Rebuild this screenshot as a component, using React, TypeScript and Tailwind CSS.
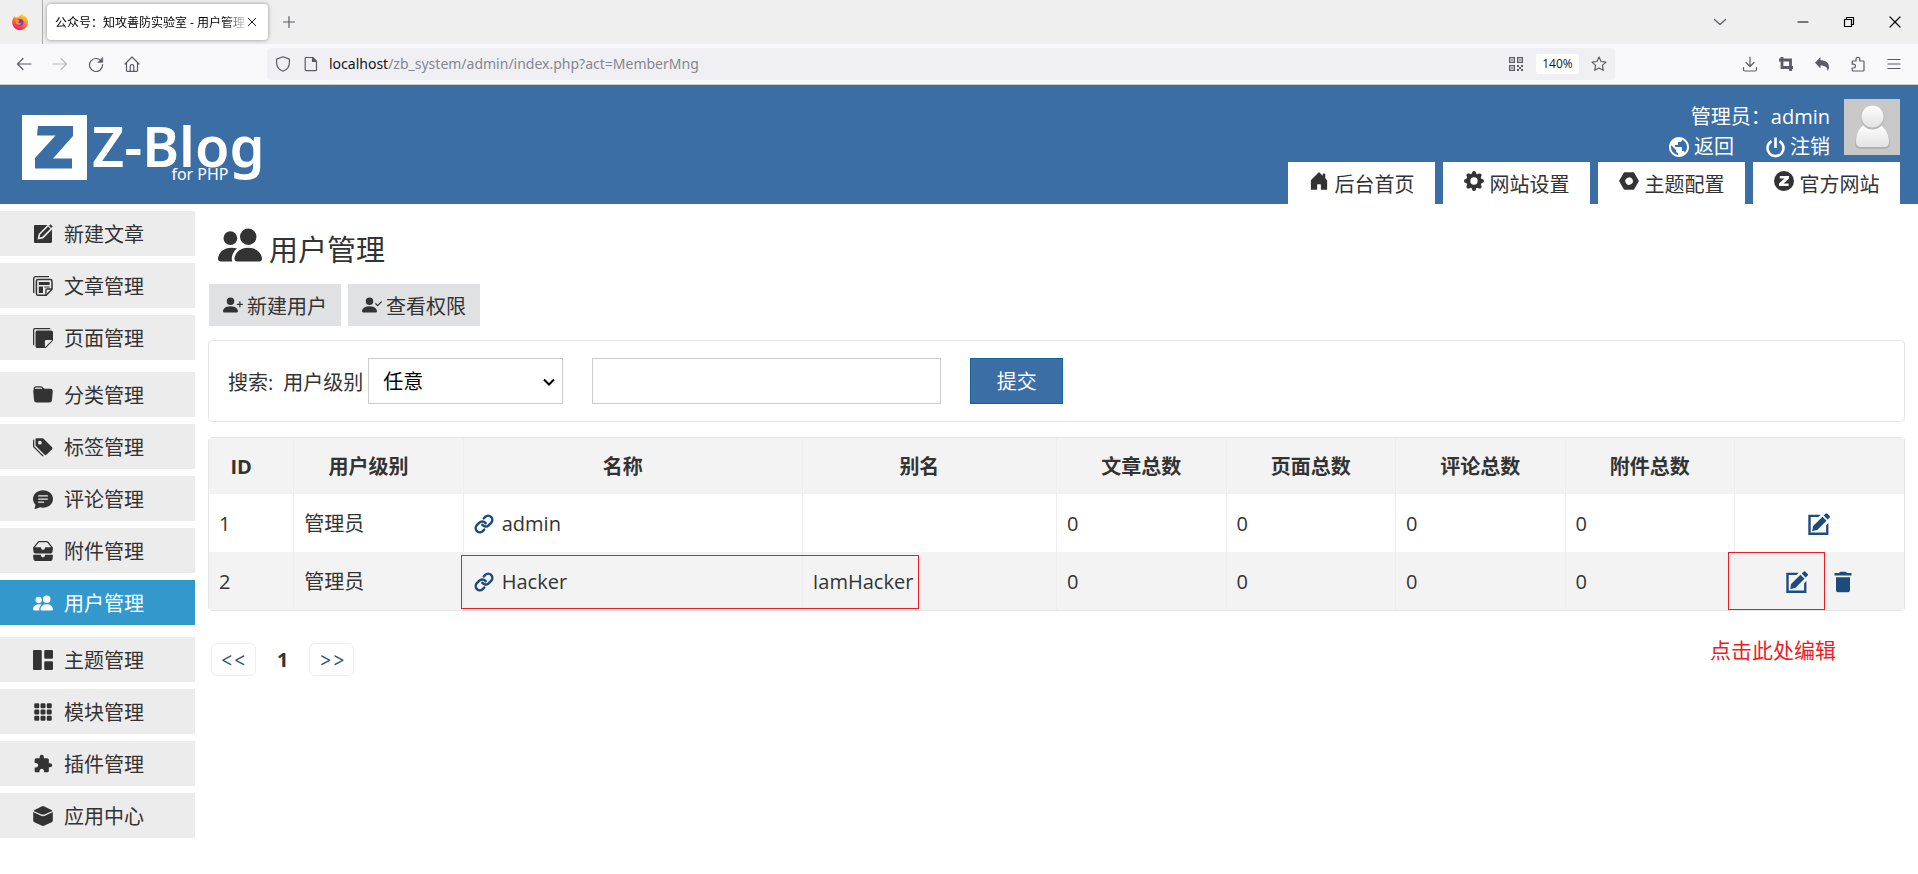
import type { ComponentType, ReactNode } from 'react';
import {
  BsStickiesFill,
  BsFolderFill,
  BsTagsFill,
  BsChatTextFill,
  BsInboxesFill,
  BsPeopleFill,
  BsGrid1X2Fill,
  BsGrid3X3GapFill,
  BsPersonPlusFill,
  BsPersonCheckFill,
  BsHouseDoorFill,
  BsGearFill,
  BsNutFill,
} from 'react-icons/bs';
import { MdExtension, MdPublic } from 'react-icons/md';
import { Link } from 'lucide-react';

type IconProps = { className?: string };
type IconType = ComponentType<IconProps>;

// Line icon on a 16px grid, used for the browser toolbar
const Line = ({ children, className = 'w-4 h-4' }: { children: ReactNode; className?: string }) => (
  <svg viewBox="0 0 16 16" className={className} fill="none" stroke="currentColor" strokeWidth="1.2" strokeLinecap="round" strokeLinejoin="round" aria-hidden="true">
    {children}
  </svg>
);

const ComposeIcon = ({ className }: IconProps) => (
  <svg viewBox="0 0 20 20" className={className} fill="currentColor" aria-hidden="true">
    <path d="M2 1h12.5L5.6 9.900 4.600 15.400 10.100 14.400 19 5.500V17.500a1.500 1.500 0 0 1-1.500 1.500h-15.500a1 1 0 0 1-1-1V2a1 1 0 0 1 1-1z" />
    <path d="M15.200 2.600l2.200 2.200-8 8-2.800.6.6-2.800zM16 1.800l1-1a.8.8 0 0 1 1.100 0l1.100 1.100a.8.8 0 0 1 0 1.100l-1 1z" />
  </svg>
);

const ArticlesIcon = ({ className }: IconProps) => (
  <svg viewBox="0 0 20 20" className={className} fill="currentColor" aria-hidden="true">
    <path d="M.7 17V2.700A2 2 0 0 1 2.700.7H16" fill="none" stroke="currentColor" strokeWidth="1.300" />
    <path d="M5 3.600h12.400a1.600 1.600 0 0 1 1.600 1.600v8l-5.800 6H5a1.600 1.600 0 0 1-1.600-1.600V5.200A1.600 1.600 0 0 1 5 3.600z" fill="none" stroke="currentColor" strokeWidth="1.500" />
    <path d="M5.800 6h10.800v3H5.800zM5.800 10.600h4.200v6.400H5.800zM11.200 10.600h5.400v.9h-5.400z" />
    <path d="M12.900 19v-4.800a1.200 1.200 0 0 1 1.200-1.200H19" fill="none" stroke="currentColor" strokeWidth="1.300" />
  </svg>
);

const AppCenterIcon = ({ className }: IconProps) => (
  <svg viewBox="0 0 20 20" className={className} fill="currentColor" aria-hidden="true">
    <path d="M9.100.3a2 2 0 0 1 1.800 0l7.600 3.600c.5.300.700.600.900 1L12 8.300a4.500 4.500 0 0 1-4 0L.6 4.900c.2-.4.400-.7.900-1z" />
    <path d="M.2 6.100L7.500 9.600a5.500 5.500 0 0 0 5 0l7.300-3.500v8.400a2 2 0 0 1-1.100 1.700l-7.800 3.500a2 2 0 0 1-1.800 0l-7.800-3.500A2 2 0 0 1 .2 14.500z" />
  </svg>
);

const ZCircleIcon = ({ className }: IconProps) => (
  <svg viewBox="0 0 20 20" className={className} aria-hidden="true">
    <circle cx="10" cy="10" r="10" fill="currentColor" />
    <path d="M5.800 5h9.200v2.400L9.600 12.600h5V15H5v-2.400l5.400-5.200H5.800z" fill="#fff" />
  </svg>
);

const PowerIcon = ({ className }: IconProps) => (
  <svg viewBox="0 0 19 21" className={className} fill="none" stroke="currentColor" strokeWidth="2.600" aria-hidden="true">
    <path d="M5.500 4.200a8 8 0 1 0 8 0M9.500.5v10.500" />
  </svg>
);

const EditIcon = ({ className }: IconProps) => (
  <svg viewBox="0 0 22 22" className={className} fill="currentColor" aria-hidden="true">
    <path d="M.3 1.800h12.400l-2.300 2.300H2.700v15.400h15.400v-7.300l2.300-2.300v12H.3z" />
    <path d="M14.500 3.800l4 4-9.300 9.300-5 .9.900-5zM15.700 2.600L17.800.500a1 1 0 0 1 1.400 0l2.500 2.500a1 1 0 0 1 0 1.400l-2.100 2.100z" />
  </svg>
);

const TrashIcon = ({ className }: IconProps) => (
  <svg viewBox="0 0 18 22" className={className} fill="currentColor" aria-hidden="true">
    <path d="M.5 2h4.500l1.200-1.300h5.600L13 2h4.500v2.600H.5zM2 6.200h14v13a2 2 0 0 1-2 2H4a2 2 0 0 1-2-2z" />
  </svg>
);

const FirefoxLogo = () => (
  <svg viewBox="0 0 16 16" className="h-4 w-4" aria-label="Firefox">
    <defs>
      <linearGradient id="fox" x1="0.8" y1="0" x2="0.3" y2="1">
        <stop offset="0" stopColor="#ffe226" />
        <stop offset="0.45" stopColor="#ff8a16" />
        <stop offset="0.8" stopColor="#ff3750" />
        <stop offset="1" stopColor="#e31587" />
      </linearGradient>
    </defs>
    <path d="M10 0c1 1.200 1.600 2 2 2.900.5-.3.700-.8.700-1.300C14.600 3.200 15.900 5.700 15.900 8.200 15.900 12.500 12.400 16 8 16S.2 12.500.2 8.200C.2 6 1 4.300 1.800 3.200L2.200 2l.9 1.700C4 3.300 5 3.300 5.800 3.500 7 2 9 1.500 10 0z" fill="url(#fox)" />
    <circle cx="8" cy="8.300" r="3.400" fill="#7a35d8" />
    <path d="M3.800 6.400c1.500-.8 3-.4 3.900.5-1 .3-1.600.9-1.500 1.600.8 1 2.200 1 3.400.5-.5 1.500-2.300 2.300-3.900 1.600C4 9.900 3.400 8 3.800 6.400z" fill="#ff9a1e" />
  </svg>
);

const Avatar = () => (
  <svg viewBox="0 0 56 56" className="h-14 w-14" role="img" aria-label="admin">
    <defs>
      <linearGradient id="figure" x1="0" y1="0" x2="0" y2="1">
        <stop offset="0" stopColor="#fff" />
        <stop offset="1" stopColor="#e2e2e2" />
      </linearGradient>
    </defs>
    <rect width="56" height="56" fill="#c8c8c8" />
    <path d="M20 27h17c4 3 9 10 9 18 0 4-3 5-7 5H18c-4 0-7-1-7-5 0-8 5-15 9-18z" fill="#b2b2b2" />
    <path d="M20 26h16c5 3 9 9 9 17 0 3-2 5-5 5H17c-3 0-5-2-5-5 0-8 3-14 8-17z" fill="url(#figure)" />
    <circle cx="28.500" cy="18.500" r="12" fill="#b8b8b8" />
    <circle cx="28.500" cy="17.500" r="11" fill="url(#figure)" />
  </svg>
);

const menuGroups: { name: string; Icon: IconType; active?: boolean }[][] = [
  [
    { name: '新建文章', Icon: ComposeIcon },
    { name: '文章管理', Icon: ArticlesIcon },
    { name: '页面管理', Icon: BsStickiesFill },
  ],
  [
    { name: '分类管理', Icon: BsFolderFill },
    { name: '标签管理', Icon: BsTagsFill },
    { name: '评论管理', Icon: BsChatTextFill },
    { name: '附件管理', Icon: BsInboxesFill },
    { name: '用户管理', Icon: BsPeopleFill, active: true },
  ],
  [
    { name: '主题管理', Icon: BsGrid1X2Fill },
    { name: '模块管理', Icon: BsGrid3X3GapFill },
    { name: '插件管理', Icon: MdExtension },
    { name: '应用中心', Icon: AppCenterIcon },
  ],
];

const topTabs: { name: string; Icon: IconType }[] = [
  { name: '后台首页', Icon: BsHouseDoorFill },
  { name: '网站设置', Icon: BsGearFill },
  { name: '主题配置', Icon: BsNutFill },
  { name: '官方网站', Icon: ZCircleIcon },
];

const columns = [
  { title: 'ID', width: 'w-[5%] pr-5' },
  { title: '用户级别', width: 'w-[10%] pr-5' },
  { title: '名称', width: 'w-[20%] pr-5' },
  { title: '别名', width: 'w-[15%] pr-5' },
  { title: '文章总数', width: 'w-[10%]' },
  { title: '页面总数', width: 'w-[10%]' },
  { title: '评论总数', width: 'w-[10%]' },
  { title: '附件总数', width: 'w-[10%]' },
  { title: '', width: 'w-[10%]' },
];

const members = [
  { id: 1, level: '管理员', name: 'admin', alias: '', counts: [0, 0, 0, 0], removable: false },
  { id: 2, level: '管理员', name: 'Hacker', alias: 'IamHacker', counts: [0, 0, 0, 0], removable: true },
];

const BrowserChrome = () => (
  <div className="text-[#5b5b66]">
    <div className="flex h-11 items-center bg-[#efefef]">
      <div className="flex h-full w-[43px] items-center border-r border-[#aaa] pl-3">
        <FirefoxLogo />
      </div>
      <div className="ml-1 flex h-9 w-[221px] items-center rounded bg-white pl-2 pr-[10px] shadow-[0_0_4px_rgba(0,0,0,0.4)]">
        <span className="flex-1 overflow-hidden whitespace-nowrap pt-0.5 text-xs text-black [mask-image:linear-gradient(to_right,black_168px,transparent_194px)]">
          公众号：知攻善防实验室 - 用户管理
        </span>
        <button aria-label="关闭标签页" className="text-black">
          <Line className="h-3 w-3"><path d="M3 3l10 10M13 3L3 13" /></Line>
        </button>
      </div>
      <button aria-label="新建标签页" className="ml-[13px]">
        <Line><path d="M8 2.500v11M2.500 8h11" /></Line>
      </button>
      <div className="ml-auto flex items-center pr-[15px] text-black">
        <button aria-label="列出标签页" className="mr-[67px] text-[#5b5b66]">
          <Line><path d="M2.500 5.500L8 10.500l5.500-5" /></Line>
        </button>
        <button aria-label="最小化" className="mr-[30px]">
          <Line><path d="M3 8h10" /></Line>
        </button>
        <button aria-label="还原" className="mr-[30px]">
          <Line><path d="M3.500 5.500h7v7h-7zM5.500 5.500v-2h7v7h-2" /></Line>
        </button>
        <button aria-label="关闭">
          <Line><path d="M3 3l10 10M13 3L3 13" /></Line>
        </button>
      </div>
    </div>

    <div className="flex h-[41px] items-center border-b border-[#ccc] bg-[#f9f9fb] pr-4">
      <div className="flex w-[267px] items-center gap-5 pl-4">
        <button aria-label="后退"><Line><path d="M15 8H1.500M7 2.500L1.500 8 7 13.500" /></Line></button>
        <button aria-label="前进" className="opacity-40"><Line><path d="M1 8h13.500M9 2.500L14.500 8 9 13.500" /></Line></button>
        <button aria-label="刷新">
          <Line>
            <path d="M13.500 5.500A6.500 6.500 0 1 0 14.500 8.500" />
            <path d="M14.800 1.500v5h-5z" fill="currentColor" strokeWidth="0.400" />
          </Line>
        </button>
        <button aria-label="主页">
          <Line><path d="M1 8l7-7 7 7M2.500 7v7.500a.8.8 0 0 0 .8.800h9.400a.8.8 0 0 0 .8-.8V7M6.200 15v-4.500a1.800 1.800 0 0 1 3.600 0V15" /></Line>
        </button>
      </div>
      <div className="flex h-8 flex-1 items-center rounded bg-[#f0f0f4] px-2">
        <Line><path d="M8 .8l6.400 2.300v3.400c0 4.300-2.600 7.400-6.400 8.700-3.800-1.300-6.400-4.400-6.400-8.700V3.100z" /></Line>
        <Line className="ml-3 h-4 w-4">
          <path d="M3 1.500h6.500l4 4v8.300a.8.8 0 0 1-.8.800H3a.8.8 0 0 1-.8-.8V2.300A.8.8 0 0 1 3 1.500z" />
          <path d="M9.500 1.500v4h4z" fill="currentColor" />
        </Line>
        <div role="textbox" aria-label="地址" className="ml-[10px] flex-1 font-['Noto_Sans',sans-serif] text-sm text-[#85858f]">
          <span className="text-[#15141a]">localhost</span>/zb_system/admin/index.php?act=MemberMng
        </div>
        <svg viewBox="0 0 16 16" className="h-4 w-4" fill="currentColor" aria-hidden="true">
          <path fillRule="evenodd" d="M1 1h6v6H1zm1.300 1.300v3.400h3.400V2.300zM9 1h6v6H9zm1.300 1.300v3.400h3.400V2.300zM1 9h6v6H1zm1.300 1.300v3.400h3.400v-3.400z" />
          <path d="M3.300 3.300h1.400v1.400H3.300zM11.300 3.300h1.400v1.400h-1.400zM3.300 11.300h1.400v1.400H3.300zM9 9h2v2H9zM13 9h2v2h-2zM11 11h2v2h-2zM9 13h2v2H9zM13 13h2v2h-2z" />
        </svg>
        <button className="ml-3 h-5 w-[43px] rounded-[3px] bg-white text-xs text-[#15141a]">140%</button>
        <button aria-label="收藏" className="ml-3">
          <Line><path d="M8 1l2.100 4.500 4.900.6-3.600 3.300.9 4.900L8 12l-4.300 2.300.9-4.900L1 6.100l4.900-.6z" /></Line>
        </button>
      </div>
      <div className="ml-[127px] flex items-center gap-5">
        <button aria-label="下载"><Line><path d="M8 1v9.500M4 6.500l4 4 4-4M1.500 11.500v2a1.500 1.500 0 0 0 1.500 1.500h10a1.500 1.500 0 0 0 1.500-1.500v-2" /></Line></button>
        <button aria-label="截图">
          <svg viewBox="0 0 16 16" className="h-4 w-4" fill="none" stroke="currentColor" strokeWidth="2.800" aria-hidden="true">
            <path d="M1 4h11.500v11M4 1v10.500h11" />
          </svg>
        </button>
        <button aria-label="撤销">
          <svg viewBox="0 0 16 16" className="h-4 w-4" fill="currentColor" aria-hidden="true">
            <path d="M6.500 1v3.200C11.500 4.200 15 6.500 15 11c0 1.800-.7 3-1.600 4 .3-3.200-1.600-5.500-6.900-5.500v3L1 6.800z" />
          </svg>
        </button>
        <button aria-label="扩展">
          <Line><path d="M3 5h3V3.200a1.900 1.900 0 0 1 3.800 0V5h3.400a.8.8 0 0 1 .8.800v8.400a.8.8 0 0 1-.8.800H3a.8.8 0 0 1-.8-.8V12h1.300a1.900 1.900 0 0 0 0-3.800H2.200V5.800A.8.8 0 0 1 3 5z" /></Line>
        </button>
        <button aria-label="菜单"><Line><path d="M2 3.500h12M2 8h12M2 12.500h12" /></Line></button>
      </div>
    </div>
  </div>
);

const Header = () => (
  <header className="flex justify-between bg-[#3a6ea5] pl-[22px] pr-[18px] text-white">
    <a href="#" className="mt-[30px] flex h-[65px] font-['Noto_Sans',sans-serif]">
      <svg viewBox="0 0 65 65" className="h-[65px] w-[65px]" aria-hidden="true">
        <rect width="65" height="65" fill="#fff" />
        <path d="M16 11h35v10L31 43.500h19v10H13V43L33.500 20.500H15z" fill="#3a6ea5" />
      </svg>
      <span className="relative ml-[5px] text-[56px] font-semibold leading-[60px]">
        Z-Blog
        <span className="absolute -bottom-0.5 right-9 text-base font-normal leading-4">for PHP</span>
      </span>
    </a>

    <div className="flex flex-col items-end pt-[14px]">
      <div className="flex gap-[14px]">
        <div className="pt-[3px] text-right leading-[30px]">
          <p>管理员：admin</p>
          <p className="flex justify-end gap-8">
            <a href="#" className="flex items-center gap-[3px]"><MdPublic className="h-6 w-6" />返回</a>
            <a href="#" className="flex items-center gap-[5px]"><PowerIcon className="h-[21px] w-[19px]" />注销</a>
          </p>
        </div>
        <Avatar />
      </div>
      <nav className="flex gap-2 text-[#333]">
        {topTabs.map(({ name, Icon }) => (
          <a key={name} href="#" className="flex h-[42px] w-[147px] items-center justify-center gap-[6px] bg-white">
            <Icon className="mb-1 h-5 w-5" />
            <span className="pt-[3px]">{name}</span>
          </a>
        ))}
      </nav>
    </div>
  </header>
);

const Sidebar = () => (
  <nav className="flex w-[195px] shrink-0 flex-col gap-3 pt-[7px]">
    {menuGroups.map((group, index) => (
      <ul key={index} className="flex flex-col gap-[7px]">
        {group.map(({ name, Icon, active }) => (
          <li key={name}>
            <a href="#" className={`flex h-[45px] items-center gap-[11px] pl-[33px] ${active ? 'bg-[#3399cc] text-white' : 'bg-[#ececec]'}`}>
              <Icon className="h-5 w-5" />
              <span className="pt-[3px]">{name}</span>
            </a>
          </li>
        ))}
      </ul>
    ))}
  </nav>
);

const MemberTable = () => (
  <div className="relative mt-[15px] rounded-sm border border-[#e6e6e6]">
    <table className="w-full table-fixed">
      <thead>
        <tr className="h-14 bg-[#f3f3f3]">
          {columns.map(({ title, width }) => (
            <th key={title} className={`${width} border-l border-[#eee] pt-0.5 font-bold first:border-l-0`}>{title}</th>
          ))}
        </tr>
      </thead>
      <tbody>
        {members.map(member => (
          <tr key={member.id} className="h-[58px] even:bg-[#f3f3f3] [&>td]:border-l [&>td]:border-[#eee] [&>td]:pl-[10px] [&>td]:pt-0.5 [&>td:first-child]:border-l-0">
            <td>{member.id}</td>
            <td>{member.level}</td>
            <td>
              <a href="#" className="flex items-center gap-2">
                <Link className="h-5 w-5 text-[#1d4c7c]" strokeWidth={3} />
                {member.name}
              </a>
            </td>
            <td>{member.alias}</td>
            {member.counts.map((count, index) => (
              <td key={index}>{count}</td>
            ))}
            <td>
              <div className="flex justify-center gap-[26px] pr-3 text-[#1d4c7c]">
                <button aria-label="编辑"><EditIcon className="h-[22px] w-[22px]" /></button>
                {member.removable && (
                  <button aria-label="删除"><TrashIcon className="h-[22px] w-[18px]" /></button>
                )}
              </div>
            </td>
          </tr>
        ))}
      </tbody>
    </table>

    {/* Red annotations */}
    <div className="absolute bottom-px left-[calc(15%-2px)] h-[54px] w-[27%] border border-[#ed1c24]" />
    <div className="absolute bottom-0 right-[79px] h-[58px] w-[97px] border border-[#ed1c24]" />
    <p className="absolute right-[68px] top-full mt-6 text-[21px] leading-8 text-[#ed1c24]">点击此处编辑</p>
  </div>
);

const App = () => (
  <div className="min-h-screen bg-white font-['Open_Sans','Noto_Sans_CJK_SC',sans-serif] text-xl text-[#333]">
    <BrowserChrome />
    <Header />
    <div className="flex">
      <Sidebar />
      <main className="flex-1 px-[13px] pt-[22px]">
        <h1 className="flex h-[45px] items-center gap-[7px] pl-[10px] text-[29px]">
          <BsPeopleFill className="mb-2 h-11 w-11" />
          <span className="pt-[3px]">用户管理</span>
        </h1>

        <div className="mt-[13px] flex gap-[7px] pl-px">
          <button className="flex h-[42px] items-center gap-1 bg-[#dfe1e2] px-[14px]">
            <BsPersonPlusFill className="h-5 w-5" />
            <span className="pt-[3px]">新建用户</span>
          </button>
          <button className="flex h-[42px] items-center gap-1 bg-[#dfe1e2] px-[14px]">
            <BsPersonCheckFill className="h-5 w-5" />
            <span className="pt-[3px]">查看权限</span>
          </button>
        </div>

        <form className="mt-[14px] flex h-[82px] items-center rounded-sm border border-[#e6e6e6] pl-[19px]">
          <span className="pt-[3px]">搜索:</span>
          <label htmlFor="level" className="ml-[10px] pt-[3px]">用户级别</label>
          <div className="relative ml-[5px]">
            <select id="level" className="h-[46px] w-[195px] appearance-none border border-[#ccc] bg-white pl-[14px] pt-0.5 text-black">
              <option>任意</option>
            </select>
            <svg viewBox="0 0 12 12" className="pointer-events-none absolute right-2 top-[18px] h-3 w-3" fill="none" stroke="#000" strokeWidth="2" aria-hidden="true">
              <path d="M1 3.500l5 5 5-5" />
            </svg>
          </div>
          <input type="text" aria-label="搜索" className="ml-[29px] h-[46px] w-[349px] border border-[#ccc] bg-white px-3" />
          <button type="button" className="ml-[29px] h-[46px] w-[93px] border border-[#116699] bg-[#3a6ea5] pt-0.5 text-white">提交</button>
        </form>

        <MemberTable />

        <div className="mt-8 flex items-center gap-[21px] pl-[3px] leading-[31px]">
          <a href="#" className="w-[45px] rounded-md border border-[#eee] text-center font-['Inter',sans-serif] font-light text-[#1d4c7c]">&lt;&lt;</a>
          <span className="font-bold">1</span>
          <a href="#" className="w-[45px] rounded-md border border-[#eee] text-center font-['Inter',sans-serif] font-light text-[#1d4c7c]">&gt;&gt;</a>
        </div>
      </main>
    </div>
  </div>
);

export default App;
